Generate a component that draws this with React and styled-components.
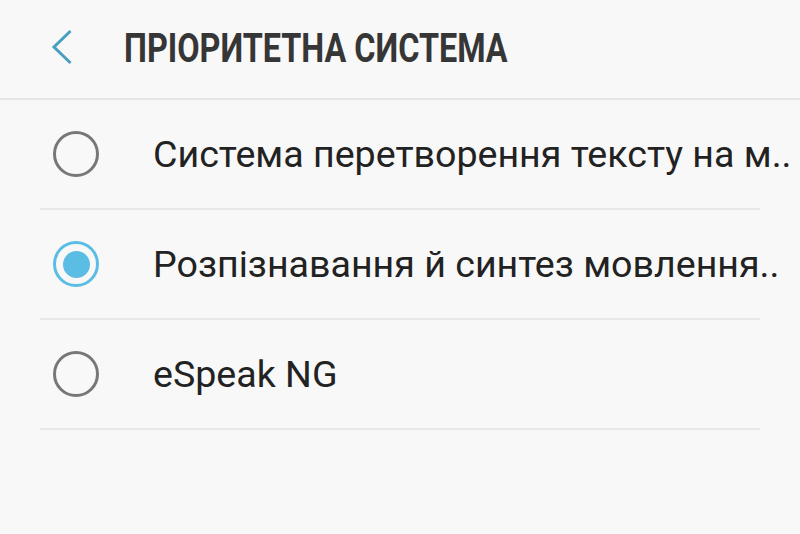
import React from "react";
import styled, { createGlobalStyle } from "styled-components";

const Global = createGlobalStyle`
  html, body { margin: 0; padding: 0; background: #f8f8f8; }
  body { font-family: Roboto, "Noto Sans", sans-serif; }
`;

const Page = styled.div`
  width: 800px;
  height: 534px;
  background: #f8f8f8;
  overflow: hidden;
`;

const Header = styled.header`
  height: 100px;
  box-sizing: border-box;
  border-bottom: 2px solid #e5e5e5;
  display: flex;
  align-items: center;
  padding-left: 48px;
`;

const BackButton = styled.button`
  border: 0;
  background: none;
  padding: 0;
  width: 28px;
  height: 38px;
  display: flex;
  align-items: center;
  justify-content: center;
  margin-right: 48px;
  margin-top: -4px;
`;

const Title = styled.h1`
  margin: 0;
  font-family: Roboto, sans-serif;
  font-weight: 700;
  font-size: 41px;
  color: #363636;
  white-space: nowrap;
  transform: scaleX(0.79);
  transform-origin: left center;
  margin-top: -3px;
`;

const List = styled.div`
  display: flex;
  flex-direction: column;
`;

const Row = styled.div`
  height: 110px;
  margin: 0 40px;
  box-sizing: border-box;
  border-bottom: 2px solid #e8e8e8;
  display: flex;
  align-items: center;
  padding-left: 13px;
`;

const Radio = styled.span`
  width: 46px;
  height: 46px;
  box-sizing: border-box;
  border-radius: 50%;
  border: 3px solid ${(p) => (p.$checked ? "#5bbde4" : "#777")};
  display: flex;
  align-items: center;
  justify-content: center;
  flex: none;
  margin-right: 54px;
  &::after {
    content: "";
    display: ${(p) => (p.$checked ? "block" : "none")};
    width: 27px;
    height: 27px;
    border-radius: 50%;
    background: #5bbde4;
  }
`;

const Label = styled.span`
  font-family: Roboto, sans-serif;
  font-size: 37.6px;
  color: #222;
  white-space: nowrap;
`;

const items = [
  { label: "Система перетворення тексту на м..", checked: false },
  { label: "Розпізнавання й синтез мовлення..", checked: true },
  { label: "eSpeak NG", checked: false },
];

export default function App() {
  return (
    <Page>
      <Global />
      <Header>
        <BackButton aria-label="Назад">
          <svg width="24" height="36" viewBox="0 0 24 36">
            <path d="M20.5 2 L4 18 L20.5 34" fill="none" stroke="#4a9fc0" strokeWidth="3" />
          </svg>
        </BackButton>
        <Title>ПРІОРИТЕТНА СИСТЕМА</Title>
      </Header>
      <List>
        {items.map((it) => (
          <Row key={it.label}>
            <Radio $checked={it.checked} />
            <Label>{it.label}</Label>
          </Row>
        ))}
      </List>
    </Page>
  );
}
